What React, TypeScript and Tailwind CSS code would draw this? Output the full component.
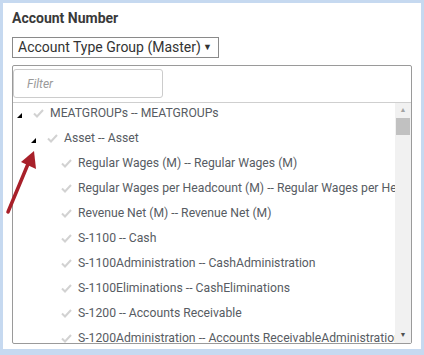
import React from "react";

type Node = { label: string; level: number; expandable?: boolean };

const rows: Node[] = [
  { label: "MEATGROUPs -- MEATGROUPs", level: 0, expandable: true },
  { label: "Asset -- Asset", level: 1, expandable: true },
  { label: "Regular Wages (M) -- Regular Wages (M)", level: 2 },
  { label: "Regular Wages per Headcount (M) -- Regular Wages per Headcount (M)", level: 2 },
  { label: "Revenue Net (M) -- Revenue Net (M)", level: 2 },
  { label: "S-1100 -- Cash", level: 2 },
  { label: "S-1100Administration -- CashAdministration", level: 2 },
  { label: "S-1100Eliminations -- CashEliminations", level: 2 },
  { label: "S-1200 -- Accounts Receivable", level: 2 },
  { label: "S-1200Administration -- Accounts ReceivableAdministration", level: 2 },
];

const indent = ["pl-[4px]", "pl-[18px]", "pl-[32px]"];

function Collapse() {
  return (
    <svg width="5" height="5" viewBox="0 0 5 5" className="block">
      <polygon points="5,0 5,5 0,5" fill="#000" />
    </svg>
  );
}

function Check() {
  return (
    <svg width="11" height="9" viewBox="0 0 11 9" className="block">
      <path d="M1 4.5 L4 7.5 L10 1" fill="none" stroke="#d2d2d2" strokeWidth="2" />
    </svg>
  );
}

export default function App() {
  return (
    <div className="h-[355px] w-[424px] bg-[#c6d9f0] pb-[6px] pl-[3px] pr-[3px] pt-[3px] font-['Roboto',sans-serif]">
      <div className="relative h-full w-full bg-white pl-[9px]">
        <div className="pt-[7px] text-[14px] font-bold leading-[17px] text-[#3a3a3a]">Account Number</div>

        <div className="mt-[10px] flex h-[21px] w-[207px] items-center justify-between border border-[#8a8a8a] pl-[5px] pr-[6px] text-[14px] text-[#333]">
          <span>Account Type Group (Master)</span>
          <span className="text-[9px] text-[#333]">▼</span>
        </div>

        <div className="mt-[7px] flex h-[279px] w-[400px] flex-col rounded-[2px] border border-[#9a9a9a]">
          <div className="border-b border-[#cfcfcf] pb-[4px] pt-[3px]">
            <div className="flex h-[29px] w-[150px] items-center rounded-[3px] border border-[#cccccc] pl-[13px] text-[12px] italic text-[#9a9a9a]">
              Filter
            </div>
          </div>

          <div className="flex min-h-0 flex-1">
            <div className="min-w-0 flex-1 overflow-hidden">
              <div className="-mt-[2px]">
                {rows.map((r) => (
                  <div
                    key={r.label}
                    className={`flex h-[25px] items-center whitespace-nowrap text-[12.2px] text-[#575c63] ${indent[r.level]}`}
                  >
                    <span className="flex w-[16px] shrink-0 items-center pt-[4px]">
                      {r.expandable ? <Collapse /> : null}
                    </span>
                    <span className="flex w-[17px] shrink-0 items-center">
                      <Check />
                    </span>
                    <span>{r.label}</span>
                  </div>
                ))}
              </div>
            </div>

            <div className="flex w-[16px] shrink-0 flex-col items-center bg-[#f1f1f1]">
              <div className="flex h-[15px] items-center text-[7px] leading-none text-[#a3a3a3]">▲</div>
              <div className="h-[17px] w-[14px] bg-[#c1c1c1]" />
              <div className="flex-1" />
              <div className="flex h-[15px] items-center text-[7px] leading-none text-[#505050]">▼</div>
            </div>
          </div>
        </div>

        <svg
          className="pointer-events-none absolute left-[-3px] top-[-3px]"
          width="60"
          height="230"
          viewBox="0 0 60 230"
        >
          <line x1="8" y1="212" x2="28" y2="164" stroke="#a8202a" strokeWidth="3.5" strokeLinecap="round" />
          <polygon points="34,151 36,169 21,162" fill="#a8202a" />
        </svg>
      </div>
    </div>
  );
}
